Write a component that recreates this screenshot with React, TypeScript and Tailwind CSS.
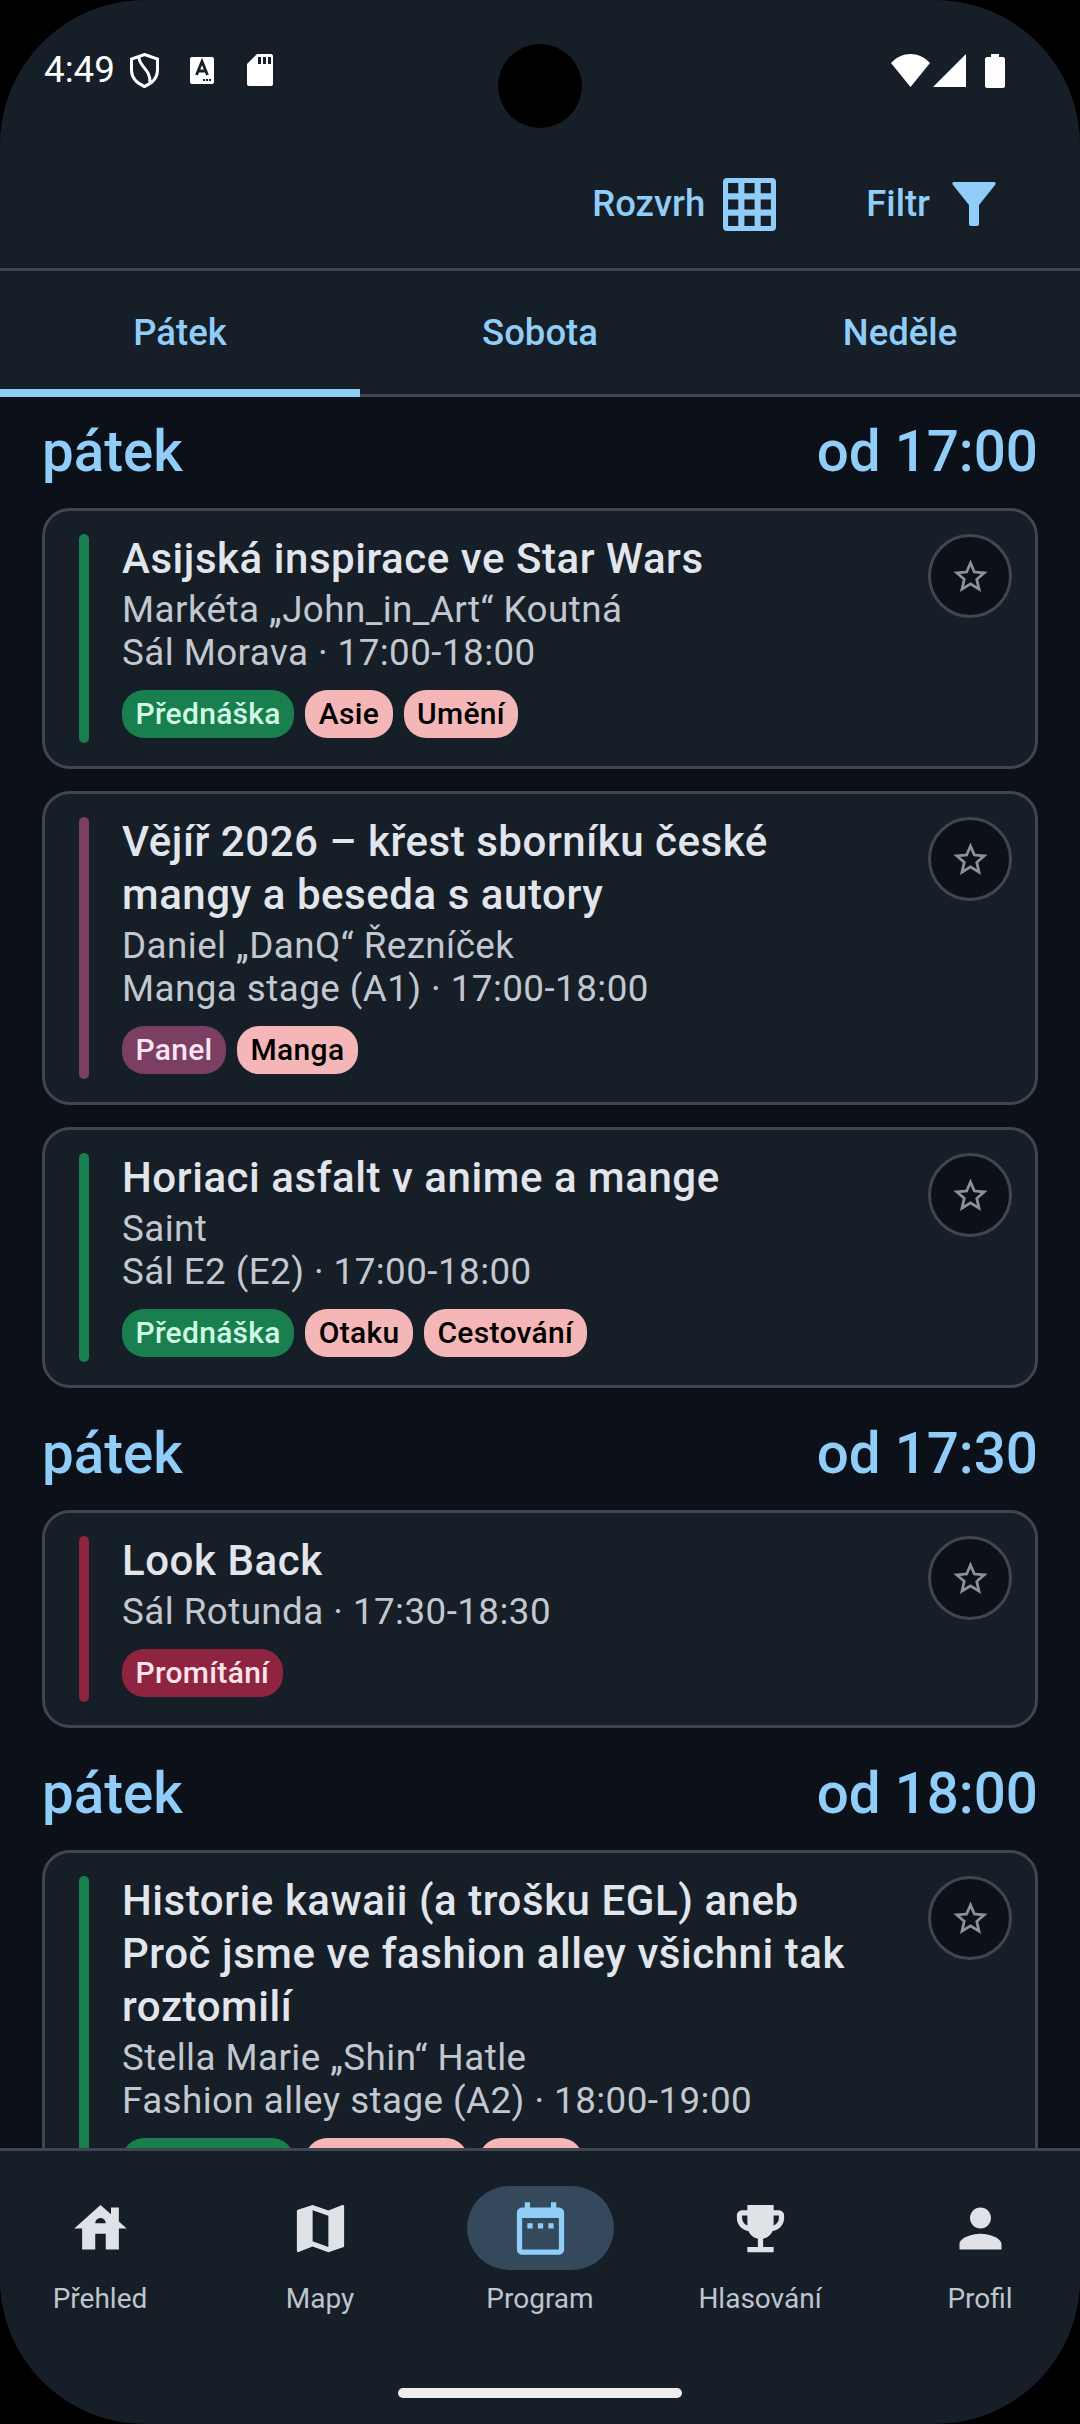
const FONT = "font-['Roboto',sans-serif]";

type Tag = { label: string; tone: 'green' | 'pink' | 'plum' | 'red' };

type Item = {
    title: string[];
    speaker?: string;
    place: string;
    bar: string;
    tags: Tag[];
};

const TAG_STYLE = {
    green: 'bg-[#1a7f4e] text-[#d1fae5]',
    pink: 'bg-[#f4b6b6] text-black',
    plum: 'bg-[#7a3f63] text-[#fbe4f1]',
    red: 'bg-[#8f2440] text-[#fde4ea]',
};

const GROUPS: { time: string; items: Item[] }[] = [
    {
        time: 'od 17:00',
        items: [
            {
                title: ['Asijská inspirace ve Star Wars'],
                speaker: 'Markéta „John_in_Art“ Koutná',
                place: 'Sál Morava · 17:00-18:00',
                bar: 'bg-[#1a7f4e]',
                tags: [
                    { label: 'Přednáška', tone: 'green' },
                    { label: 'Asie', tone: 'pink' },
                    { label: 'Umění', tone: 'pink' },
                ],
            },
            {
                title: ['Vějíř 2026 – křest sborníku české', 'mangy a beseda s autory'],
                speaker: 'Daniel „DanQ“ Řezníček',
                place: 'Manga stage (A1) · 17:00-18:00',
                bar: 'bg-[#7a3f63]',
                tags: [
                    { label: 'Panel', tone: 'plum' },
                    { label: 'Manga', tone: 'pink' },
                ],
            },
            {
                title: ['Horiaci asfalt v anime a mange'],
                speaker: 'Saint',
                place: 'Sál E2 (E2) · 17:00-18:00',
                bar: 'bg-[#1a7f4e]',
                tags: [
                    { label: 'Přednáška', tone: 'green' },
                    { label: 'Otaku', tone: 'pink' },
                    { label: 'Cestování', tone: 'pink' },
                ],
            },
        ],
    },
    {
        time: 'od 17:30',
        items: [
            {
                title: ['Look Back'],
                place: 'Sál Rotunda · 17:30-18:30',
                bar: 'bg-[#8f2440]',
                tags: [{ label: 'Promítání', tone: 'red' }],
            },
        ],
    },
    {
        time: 'od 18:00',
        items: [
            {
                title: ['Historie kawaii (a trošku EGL) aneb', 'Proč jsme ve fashion alley všichni tak', 'roztomilí'],
                speaker: 'Stella Marie „Shin“ Hatle',
                place: 'Fashion alley stage (A2) · 18:00-19:00',
                bar: 'bg-[#1a7f4e]',
                tags: [
                    { label: 'Přednáška', tone: 'green' },
                    { label: 'J-Fashion', tone: 'pink' },
                    { label: 'Móda', tone: 'pink' },
                ],
            },
        ],
    },
];

const NAV = [
    {
        label: 'Přehled',
        path: 'M19 9.3V4h-3v2.6L12 3 2 12h3v8h5v-6h4v6h5v-8h3l-3-2.7zm-9 .7c0-1.1.9-2 2-2s2 .9 2 2h-4z',
    },
    {
        label: 'Mapy',
        path: 'M20.5 3l-.16.03L15 5.1 9 3 3.36 4.9c-.21.07-.36.25-.36.48V20.5c0 .28.22.5.5.5l.16-.03L9 18.9l6 2.1 5.64-1.9c.21-.07.36-.25.36-.48V3.5c0-.28-.22-.5-.5-.5zM15 19l-6-2.11V5l6 2.11V19z',
    },
    {
        label: 'Program',
        path: 'M19 4h-1V2h-2v2H8V2H6v2H5c-1.1 0-2 .9-2 2v14c0 1.1.9 2 2 2h14c1.1 0 2-.9 2-2V6c0-1.1-.9-2-2-2zm0 16H5V8h14v12zM9 12H7v-2h2v2zm4 0h-2v-2h2v2zm4 0h-2v-2h2v2z',
    },
    {
        label: 'Hlasování',
        path: 'M19 5h-2V3H7v2H5c-1.1 0-2 .9-2 2v1c0 2.55 1.92 4.63 4.39 4.94.63 1.5 1.98 2.63 3.61 2.96V19H7v2h10v-2h-4v-3.1c1.63-.33 2.98-1.46 3.61-2.96C19.08 12.63 21 10.55 21 8V7c0-1.1-.9-2-2-2zM5 8V7h2v3.82C5.84 10.4 5 9.3 5 8zm14 0c0 1.3-.84 2.4-2 2.82V7h2v1z',
    },
    {
        label: 'Profil',
        path: 'M12 12c2.21 0 4-1.79 4-4s-1.79-4-4-4-4 1.79-4 4 1.79 4 4 4zm0 2c-2.67 0-8 1.34-8 4v2h16v-2c0-2.66-5.33-4-8-4z',
    },
];

const StatusBar = () => (
    <div className="flex h-[140px] shrink-0 items-start justify-between pl-[44px] pr-[75px] pt-[50px] text-white">
        <div className="flex items-center">
            <span className="text-[36.75px] leading-[40px]">4:49</span>
            <svg viewBox="0 0 29 35" className="ml-[15px] h-[35px] w-[29px]" fill="none" stroke="white" strokeWidth="3">
                <path d="M14.5 1.5 L27.5 6 V17 C27.5 25 21.5 30.5 14.5 33.5 C7.5 30.5 1.5 25 1.5 17 V6 Z" />
                <path d="M9 3.5 C8 13 21 16 20 30" />
            </svg>
            <svg viewBox="0 0 24 27" className="ml-[31px] h-[27px] w-[24px]">
                <rect width="24" height="27" rx="2" fill="white" />
                <path d="M6.5 18 L12 4.5 L17.5 18 M8.5 14 H15.5" stroke="#161e27" strokeWidth="2.8" fill="none" />
                <path d="M13 22h2v2h-2zM16 22h2v2h-2zM19 22h2v2h-2z" fill="#161e27" />
            </svg>
            <svg viewBox="0 0 26 32" className="ml-[33px] h-[32px] w-[26px]">
                <path d="M10 0 H24 C25 0 26 1 26 2 V30 C26 31 25 32 24 32 H2 C1 32 0 31 0 30 V10 Z" fill="white" />
                <path d="M11 3h3v7h-3zM16 3h3v7h-3zM21 3h3v7h-3z" fill="#161e27" />
            </svg>
        </div>
        <div className="flex items-start pt-[4px]">
            <svg viewBox="0 0 39 33" className="h-[33px] w-[39px]">
                <path d="M0 9 C11 -3 28 -3 39 9 L19.5 33 Z" fill="white" />
            </svg>
            <svg viewBox="0 0 33 33" className="ml-[3px] h-[33px] w-[33px]">
                <path d="M33 0 V33 H0 Z" fill="white" />
            </svg>
            <svg viewBox="0 0 20 34" className="ml-[19px] h-[34px] w-[20px]">
                <path d="M6 0 H14 V3 H18 C19 3 20 4 20 5 V32 C20 33 19 34 18 34 H2 C1 34 0 33 0 32 V5 C0 4 1 3 2 3 H6 Z" fill="white" />
            </svg>
        </div>
    </div>
);

const Toolbar = () => (
    <div className="flex h-[131px] shrink-0 items-center justify-end border-b-[3px] border-[#3f464f] pr-[84px] text-[#90cdf8]">
        <span className="text-[36.5px] font-medium">Rozvrh</span>
        <svg viewBox="0 0 52 52" className="ml-[18px] h-[53px] w-[53px]" fill="#90cdf8">
            <path
                fillRule="evenodd"
                d="M4 0H48A4 4 0 0 1 52 4V48A4 4 0 0 1 48 52H4A4 4 0 0 1 0 48V4A4 4 0 0 1 4 0ZM5 5V15H15V5ZM21 5V15H31V5ZM37 5V15H47V5ZM5 21V31H15V21ZM21 21V31H31V21ZM37 21V31H47V21ZM5 37V47H15V37ZM21 37V47H31V37ZM37 37V47H47V37Z"
            />
        </svg>
        <span className="ml-[90px] text-[36.5px] font-medium">Filtr</span>
        <svg viewBox="0 0 44 44" className="ml-[22px] h-[44px] w-[44px]" fill="#90cdf8">
            <path d="M2 0H42C44 0 44 2 43 3L27 23V42C27 43 26 44 25 44H19C18 44 17 43 17 42V23L1 3C0 2 0 0 2 0Z" />
        </svg>
    </div>
);

const Tabs = () => (
    <div className="relative flex h-[126px] shrink-0 border-b-[3px] border-[#3f464f] text-[#90cdf8]">
        {['Pátek', 'Sobota', 'Neděle'].map((tab) => (
            <div key={tab} className="flex flex-1 items-center justify-center pt-[2px] text-[36.5px] font-medium">
                {tab}
            </div>
        ))}
        <div className="absolute bottom-[-3px] left-0 h-[8px] w-[360px] bg-[#90cdf8]" />
    </div>
);

const EventCard = ({ item }: { item: Item }) => (
    <div className="flex shrink-0 gap-[33px] rounded-[28px] border-[3px] border-[#3f464f] bg-[#161e27] pb-[23px] pl-[34px] pr-[23px] pt-[23px]">
        <div className={`w-[10px] shrink-0 rounded-full ${item.bar}`} />
        <div className="min-w-0 flex-1 pb-[5px]">
            <div className="-mt-[2px] text-[42px] font-medium leading-[53px] tracking-[0.55px] text-[#e2e6ec]">
                {item.title.map((line) => (
                    <div key={line}>{line}</div>
                ))}
            </div>
            {item.speaker && (
                <div className="mt-[3px] text-[36.75px] leading-[43px] tracking-[0.45px] text-[#c3c8d0]">{item.speaker}</div>
            )}
            <div className={`text-[36.75px] leading-[43px] tracking-[0.45px] text-[#c3c8d0] ${item.speaker ? '' : 'mt-[3px]'}`}>
                {item.place}
            </div>
            <div className="mt-[16px] flex gap-[11px]">
                {item.tags.map((tag) => (
                    <span
                        key={tag.label}
                        className={`rounded-[22px] px-[13.5px] text-[30px] font-medium leading-[48px] tracking-[0.3px] ${TAG_STYLE[tag.tone]}`}
                    >
                        {tag.label}
                    </span>
                ))}
            </div>
        </div>
        <div className="flex h-[84px] w-[84px] shrink-0 items-center justify-center self-start rounded-full border-[3px] border-[#3f464f] bg-[#0c1018]">
            <svg viewBox="0 0 24 24" className="h-[41px] w-[41px]" fill="#8b929b">
                <path d="M22 9.24l-7.19-.62L12 2 9.19 8.63 2 9.24l5.46 4.73L5.82 21 12 17.27 18.18 21l-1.63-7.03L22 9.24zM12 15.4l-3.76 2.27 1-4.28-3.32-2.88 4.38-.38L12 6.1l1.71 4.04 4.38.38-3.32 2.88 1 4.28L12 15.4z" />
            </svg>
        </div>
    </div>
);

const BottomNav = () => (
    <div className="absolute bottom-0 left-0 right-0 h-[276px] border-t-[3px] border-[#3f464f] bg-[#161e27]">
        <div className="-mx-[10px] flex pt-[35px]">
            {NAV.map((entry) => {
                const active = entry.label === 'Program';
                return (
                    <div key={entry.label} className="flex flex-1 flex-col items-center">
                        <div className={`flex h-[84px] w-[147px] items-center justify-center rounded-full ${active ? 'bg-[#35495c]' : ''}`}>
                            <svg viewBox="0 0 24 24" className="h-[63px] w-[63px]" fill={active ? '#90cdf8' : '#dfe3e8'}>
                                <path d={entry.path} />
                            </svg>
                        </div>
                        <span className="mt-[10px] text-[28px] leading-[38px] text-[#bdc5cf]">{entry.label}</span>
                    </div>
                );
            })}
        </div>
        <div className="absolute bottom-[26px] left-[398px] h-[10px] w-[284px] rounded-full bg-[#eeeeee]" />
    </div>
);

export default function App() {
    return (
        <div className={`relative h-[2424px] w-[1080px] overflow-hidden bg-black ${FONT}`}>
            <div className="relative flex h-full flex-col overflow-hidden rounded-[145px] bg-[#0c1018]">
                <div className="shrink-0 bg-[#161e27]">
                    <StatusBar />
                    <Toolbar />
                    <Tabs />
                </div>
                <div className="flex flex-col gap-[33px] px-[42px] pt-[22px]">
                    {GROUPS.map((group) => (
                        <div key={group.time} className="flex flex-col gap-[22px]">
                            <div className="mb-[1px] flex justify-between text-[56.5px] font-medium leading-[66px] text-[#90cdf8]">
                                <span>pátek</span>
                                <span>{group.time}</span>
                            </div>
                            {group.items.map((item) => (
                                <EventCard key={item.title[0]} item={item} />
                            ))}
                        </div>
                    ))}
                </div>
                <BottomNav />
            </div>
            <div className="absolute left-[498px] top-[44px] h-[84px] w-[84px] rounded-full bg-black" />
        </div>
    );
}
